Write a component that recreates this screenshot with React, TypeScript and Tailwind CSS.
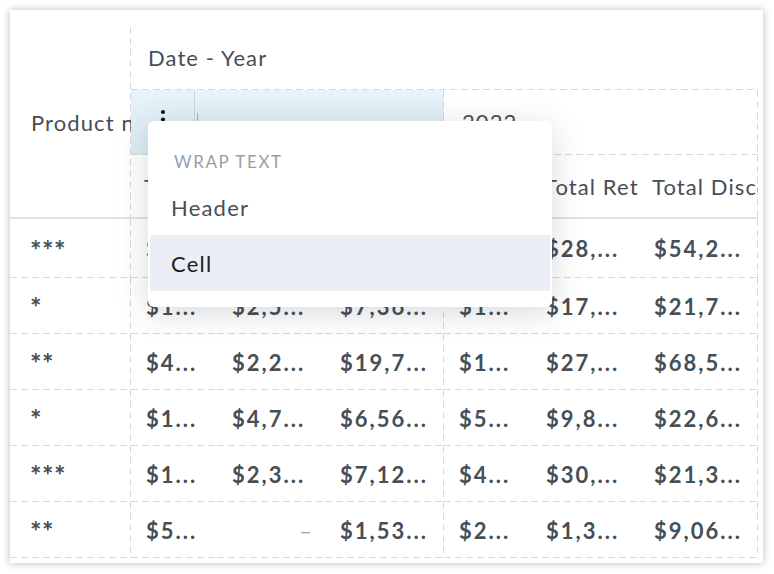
import React from 'react';

const GRID = 'grid grid-cols-[121px_86px_108px_119px_87px_108px_119px]';

// dashed grid lines, drawn as backgrounds so the dash length matches (7px on / 4px off)
const DASH_B =
  '[background:repeating-linear-gradient(90deg,#d2d9e0_0_7px,transparent_7px_11px)_left_bottom/100%_1px_no-repeat]';
const DASH_R =
  '[background:repeating-linear-gradient(180deg,#d2d9e0_0_7px,transparent_7px_11px)_right_top/1px_100%_no-repeat]';
const DASH_BR =
  '[background:repeating-linear-gradient(90deg,#d2d9e0_0_7px,transparent_7px_11px)_left_bottom/100%_1px_no-repeat,repeating-linear-gradient(180deg,#d2d9e0_0_7px,transparent_7px_11px)_right_top/1px_100%_no-repeat]';
const DASH_BR_SELECTED =
  '[background:repeating-linear-gradient(90deg,#cdd6dd_0_7px,transparent_7px_11px)_left_bottom/100%_1px_no-repeat,repeating-linear-gradient(180deg,#cdd6dd_0_7px,transparent_7px_11px)_right_top/1px_100%_no-repeat,linear-gradient(180deg,#e7f4f9,#d9ebf1)]';

type Row = { rating: string; values: string[] };

const rows: Row[] = [
  { rating: '***', values: ['$1...', '$2,4...', '$9,81...', '$1...', '$28,...', '$54,2...'] },
  { rating: '*', values: ['$1...', '$2,5...', '$7,36...', '$1...', '$17,...', '$21,7...'] },
  { rating: '**', values: ['$4...', '$2,2...', '$19,7...', '$1...', '$27,...', '$68,5...'] },
  { rating: '*', values: ['$1...', '$4,7...', '$6,56...', '$5...', '$9,8...', '$22,6...'] },
  { rating: '***', values: ['$1...', '$2,3...', '$7,12...', '$4...', '$30,...', '$21,3...'] },
  { rating: '**', values: ['$5...', '–', '$1,53...', '$2...', '$1,3...', '$9,06...'] },
];

const measures = ['Total Revenue', 'Total Returns', 'Total Discount'];

function DataRow({ row, first }: { row: Row; first: boolean }) {
  const h = first ? 'h-[59px]' : 'h-[56px]';
  return (
    <>
      <div
        className={`${h} ${DASH_BR} pl-[20px] pt-[3px] flex items-center font-bold text-[27px] tracking-[0.5px] text-[#464e56]`}
      >
        {row.rating}
      </div>
      {row.values.map((v, i) => {
        const bg = i === 2 || i === 5 ? DASH_BR : DASH_B;
        const empty = v === '–';
        return (
          <div
            key={i}
            className={`${h} ${bg} flex items-center overflow-hidden whitespace-nowrap ${
              empty
                ? 'justify-end pr-[13px] text-[#9aa5b0] font-normal'
                : 'pl-[15px] font-bold tracking-[2px] text-[#464e56]'
            }`}
          >
            {v}
          </div>
        );
      })}
    </>
  );
}

function DotsIcon() {
  return (
    <svg width="6" height="22" viewBox="0 0 6 22" className="block">
      <circle cx="3" cy="3" r="2.1" fill="#111" />
      <circle cx="3" cy="10.5" r="2.1" fill="#111" />
      <circle cx="3" cy="18" r="2.1" fill="#111" />
    </svg>
  );
}

function WrapMenu() {
  return (
    <div className="absolute left-[138px] top-[111px] w-[404px] h-[186px] bg-white rounded-[6px] shadow-[0_6px_32px_rgba(40,50,60,0.18)] px-[2px] pt-[24px]">
      <div className="h-[34px] pl-[24px] flex items-center text-[17px] uppercase text-[#94a1ad] tracking-[1.6px]">
        Wrap text
      </div>
      <div className="h-[56px] pl-[21px] flex items-center text-[22px] tracking-[1.2px] text-[#464e56]">Header</div>
      <div className="h-[56px] pl-[21px] flex items-center text-[22px] tracking-[1.2px] text-[#1c2126] bg-[#ebeef5]">
        Cell
      </div>
    </div>
  );
}

export default function App() {
  return (
    <div className="w-[774px] h-[574px] bg-white p-[10px] font-['Lato','Noto_Sans',sans-serif] text-[22px]">
      <div className="relative w-[753px] h-[553px] bg-white shadow-[0_0_8px_rgba(0,0,0,0.28)] pt-[17px] overflow-hidden">
        <div className={GRID}>
          {/* header: attribute column */}
          <div
            className={`row-span-3 ${DASH_R} border-b-2 border-[#dde3e9] pl-[21px] pr-[9px] flex items-center overflow-hidden whitespace-nowrap tracking-[1.1px] text-[#464e56]`}
          >
            Product name
          </div>

          {/* header row 1 */}
          <div className={`col-span-6 h-[63px] ${DASH_B} pl-[17px] pb-[3px] flex items-center tracking-[1.1px] text-[#464e56]`}>
            Date - Year
          </div>

          {/* header row 2 */}
          <div className={`col-span-3 h-[65px] ${DASH_BR_SELECTED} relative flex`}>
            <div className="w-[64px] h-[64px] border-r border-[#cad9df] flex items-center justify-center pb-[5px]">
              <DotsIcon />
            </div>
            <div className="absolute left-[66px] top-[23px] w-px h-[14px] bg-[#a3b0b8]" />
          </div>
          <div className={`col-span-3 h-[65px] ${DASH_BR} pl-[18px] pb-[3px] flex items-center tracking-[1.1px] text-[#464e56]`}>
            2022
          </div>

          {/* header row 3: measures */}
          {[0, 1].map((g) =>
            measures.map((m, i) => (
              <div
                key={`${g}-${i}`}
                className={`h-[64px] border-b-2 border-[#dde3e9] ${
                  i === 2 ? DASH_R : ''
                } pl-[13px] flex items-center overflow-hidden whitespace-nowrap tracking-[1.1px] text-[#464e56]`}
              >
                {m}
              </div>
            ))
          )}

          {rows.map((r, i) => (
            <DataRow key={i} row={r} first={i === 0} />
          ))}
        </div>

        <WrapMenu />
      </div>
    </div>
  );
}
